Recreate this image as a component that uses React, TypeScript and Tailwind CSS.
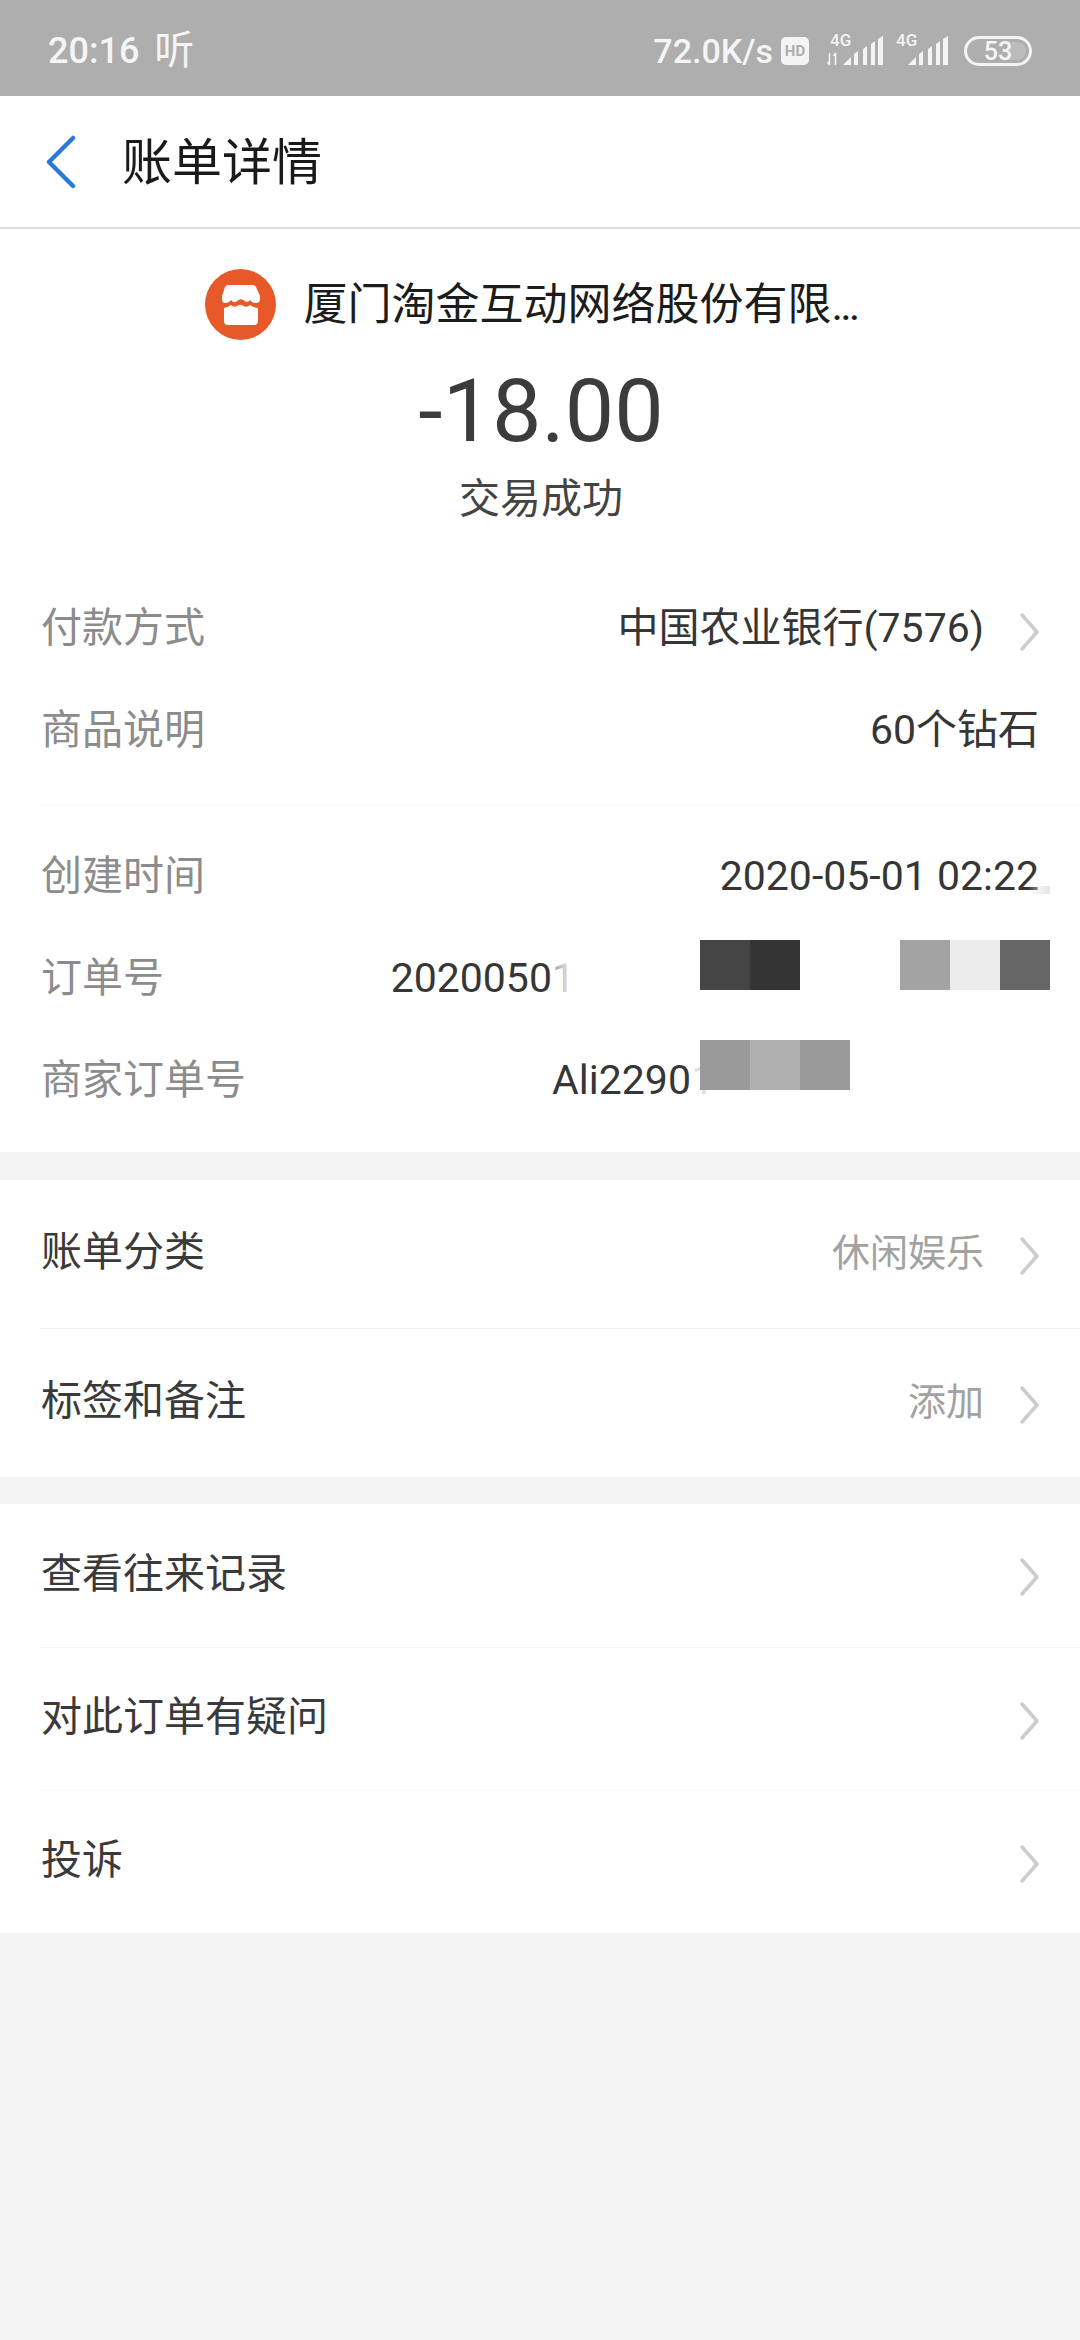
const font = "font-['Roboto','Noto_Sans_CJK_SC',sans-serif]";

function Chevron() {
  return (
    <svg width="22" height="38" viewBox="0 0 22 38" className="ml-[35px] mr-[-2px] mt-[6px] shrink-0">
      <path d="M3 2 L18 19 L3 36" fill="none" stroke="#cccccc" strokeWidth="3.5" strokeLinecap="round" strokeLinejoin="round" />
    </svg>
  );
}

function SignalWithArrows() {
  return (
    <svg width="57" height="36" viewBox="0 -6 57 36" className="-mt-[6px] shrink-0">
      <text x="3" y="10" fontSize="17" fontWeight="500" fill="#f4f4f4" fontFamily="Roboto">4G</text>
      <path d="M2.500 17v12M0.500 26l2 3M8.500 29V17M6.500 20l2-3" stroke="#f4f4f4" strokeWidth="1.500" fill="none" />
      <path d="M16 29L24 21V29ZM27 29V18L31 15V29ZM36 29V13L40 10V29ZM44 29V8L48 5V29ZM51 29V3L56 0V29Z" fill="#f4f4f4" />
    </svg>
  );
}

function Signal() {
  return (
    <svg width="53" height="36" viewBox="0 -6 53 36" className="-mt-[6px] shrink-0">
      <text x="0" y="10" fontSize="17" fontWeight="500" fill="#f4f4f4" fontFamily="Roboto">4G</text>
      <path d="M12 29L20 21V29ZM23 29V18L27 15V29ZM32 29V13L36 10V29ZM40 29V8L44 5V29ZM47 29V3L52 0V29Z" fill="#f4f4f4" />
    </svg>
  );
}

function StatusBar() {
  return (
    <div className="flex h-[96px] items-center bg-[#aeaeae] pl-[48px] pr-[48px] pt-[6px] text-[#f5f5f5]">
      <span className="text-[36px] font-medium leading-none">20:16</span>
      <span className="ml-[15px] text-[40px] leading-none">听</span>
      <div className="ml-auto flex items-center">
        <span className="text-[34px] font-medium leading-none">72.0K/s</span>
        <span className="ml-[8px] flex h-[28px] w-[28px] items-center justify-center rounded-[5px] bg-[#f4f4f4] text-[15px] font-bold text-[#aeaeae]">HD</span>
        <div className="ml-[18px]"><SignalWithArrows /></div>
        <div className="ml-[12px]"><Signal /></div>
        <div className="relative ml-[15px] flex h-[30px] w-[68px] items-center justify-center rounded-full border-[3px] border-[#f4f4f4] text-[25px] font-medium leading-none">
          <span className="absolute right-[3px] top-[3px] h-[18px] w-[18px] rounded-r-full bg-[#bcbcbc]" />
          <span className="relative">53</span>
        </div>
      </div>
    </div>
  );
}

function StoreIcon() {
  return (
    <svg width="71" height="71" viewBox="0 0 71 71" className="shrink-0">
      <circle cx="35.500" cy="35.500" r="35.500" fill="#e8592a" />
      <path d="M23 16H48Q50 16 51 18L55 27V30Q55 34 51 34Q47 34 45 31Q42 35 38.500 31Q35.500 29 32 32Q29 35 26 31Q24 34 20 34Q17 34 17 30V27L20 18Q21 16 23 16Z" fill="#ffffff" />
      <path d="M19 39Q22 39 26 36Q29 39 32 37Q35.500 34.500 38.500 37Q42 39 45 36Q49 39 53 39V52Q53 56 49 56H23Q19 56 19 52Z" fill="#ffffff" />
    </svg>
  );
}

function InfoRow({ label, children }: { label: string; children: React.ReactNode }) {
  return (
    <div className="flex h-[102px] items-center justify-between pl-[41px] pr-[41px] pt-[3px] text-[41px] leading-none">
      <span className="text-[#8c8c8c]">{label}</span>
      {children}
    </div>
  );
}

function MenuRow({ label, value, className }: { label: string; value?: string; className: string }) {
  return (
    <div className={`flex items-center pb-[3px] pl-[41px] pr-[41px] text-[41px] leading-none ${className}`}>
      <span className="text-[#3a3a3a]">{label}</span>
      {value && <span className="ml-auto text-[38px] text-[#a2a2a2]">{value}</span>}
      <span className={value ? "" : "ml-auto"}><Chevron /></span>
    </div>
  );
}

export default function App() {
  return (
    <div className={`min-h-screen bg-[#f4f4f4] ${font}`}>
      <StatusBar />

      <div className="flex h-[133px] items-center border-b-2 border-[#dddddd] bg-white">
        <svg width="32" height="54" viewBox="0 0 32 54" className="ml-[45px] shrink-0">
          <path d="M28 3 L4 27 L28 51" fill="none" stroke="#2a78dc" strokeWidth="4.500" strokeLinecap="round" strokeLinejoin="round" />
        </svg>
        <span className="ml-[45px] pt-[2px] text-[50px] leading-none text-[#1a1a1a]">账单详情</span>
      </div>

      <div className="bg-white pb-[22px]">
        <div className="flex flex-col items-center pt-[40px]">
          <div className="flex h-[71px] items-center gap-[28px] pr-[18px]">
            <StoreIcon />
            <span className="text-[44px] leading-none text-[#1c1c1c]">
              厦门淘金互动网络股份有限<span className="tracking-[-3px]">...</span>
            </span>
          </div>
          <div className="mt-[21px] flex h-[100px] items-center pl-[2px] text-[88px] leading-none text-[#3c3c3c]">-18.00</div>
          <div className="mt-[13px] flex h-[50px] items-center pl-[2px] text-[41px] leading-none text-[#444444]">交易成功</div>
        </div>

        <div className="mt-[52px]">
          <InfoRow label="付款方式">
            <div className="flex items-center text-[#363636]">
              <span>中国农业银行(7576)</span>
              <Chevron />
            </div>
          </InfoRow>
          <InfoRow label="商品说明">
            <span className="text-[#363636]">60个钻石</span>
          </InfoRow>
        </div>

        <div className="ml-[40px] mt-[25px] h-px bg-[#f6f6f6]" />

        <div className="mt-[18px]">
          <InfoRow label="创建时间">
            <div className="relative text-[#363636]">
              <span>2020-05-01 02:22</span>
              <span className="absolute bottom-[3px] right-[-11px] h-[8px] w-[22px] bg-gradient-to-r from-transparent to-[#e6e6e6]" />
            </div>
          </InfoRow>
          <InfoRow label="订单号">
            <div className="mr-[-11px] flex items-center text-[#363636]">
              <span className="relative">
                20200501
                <span className="absolute bottom-0 right-0 top-0 w-[23px] bg-gradient-to-r from-white/50 to-white" />
              </span>
              <div className="ml-[125px] flex h-[50px] -translate-y-[14px]">
                <span className="w-[50px] bg-[#454545]" />
                <span className="w-[50px] bg-[#343434]" />
                <span className="ml-[100px] w-[50px] bg-[#a3a3a3]" />
                <span className="w-[50px] bg-[#ececec]" />
                <span className="w-[50px] bg-[#666666]" />
              </div>
            </div>
          </InfoRow>
          <InfoRow label="商家订单号">
            <div className="mr-[189px] flex items-center text-[#363636]">
              <span className="relative whitespace-nowrap">
                Ali22901
                <span className="absolute bottom-0 right-0 top-0 w-[23px] bg-white/85" />
              </span>
              <div className="ml-[-14px] flex h-[50px] -translate-y-[16px]">
                <span className="w-[50px] bg-[#9a9a9a]" />
                <span className="w-[50px] bg-[#b0b0b0]" />
                <span className="w-[50px] bg-[#9a9a9a]" />
              </div>
            </div>
          </InfoRow>
        </div>
      </div>

      <div className="mt-[28px] bg-white">
        <MenuRow label="账单分类" value="休闲娱乐" className="h-[148px]" />
        <div className="ml-[40px] h-px bg-[#f2f2f2]" />
        <MenuRow label="标签和备注" value="添加" className="h-[148px]" />
      </div>

      <div className="mt-[27px] bg-white">
        <MenuRow label="查看往来记录" className="h-[143px]" />
        <div className="ml-[40px] h-px bg-[#f6f6f6]" />
        <MenuRow label="对此订单有疑问" className="h-[142px]" />
        <div className="ml-[40px] h-px bg-[#f6f6f6]" />
        <MenuRow label="投诉" className="h-[142px]" />
      </div>
    </div>
  );
}
